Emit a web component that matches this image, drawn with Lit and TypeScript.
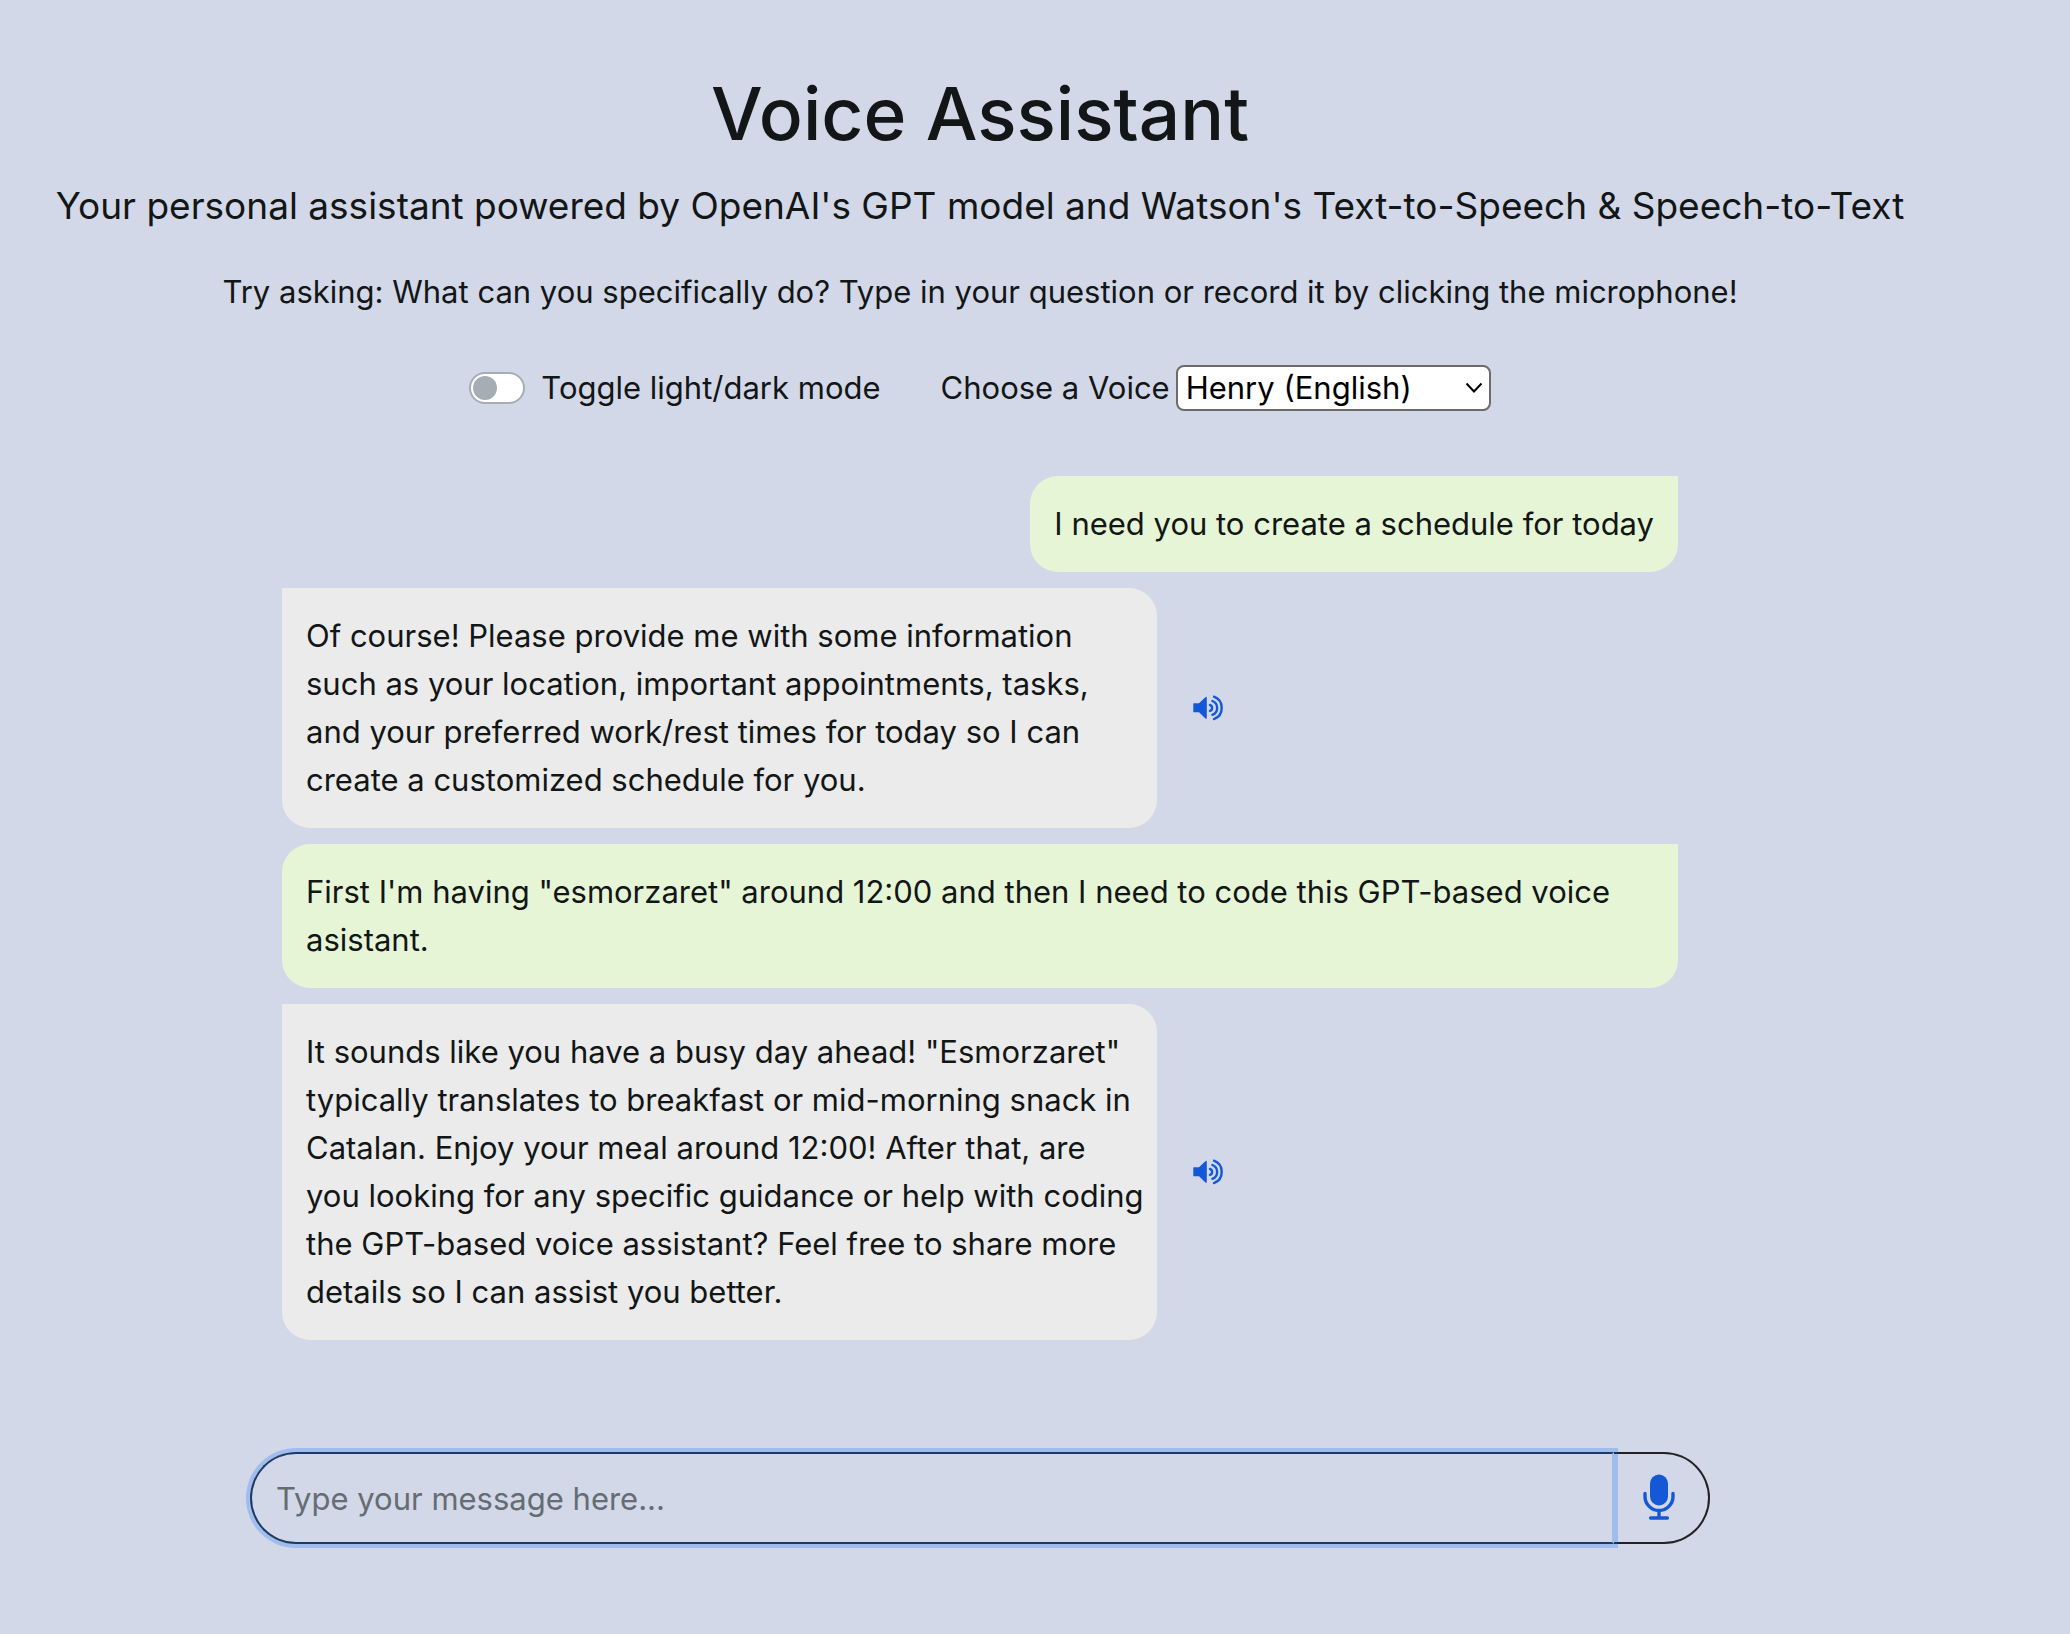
import { LitElement, html, css, svg } from "lit";
import { customElement, property, state } from "lit/decorators.js";

interface Message {
  from: "user" | "assistant";
  text: string;
}

const MESSAGES: Message[] = [
  { from: "user", text: "I need you to create a schedule for today" },
  {
    from: "assistant",
    text: "Of course! Please provide me with some information such as your location, important appointments, tasks, and your preferred work/rest times for today so I can create a customized schedule for you.",
  },
  {
    from: "user",
    text: 'First I\'m having "esmorzaret" around 12:00 and then I need to code this GPT-based voice asistant.',
  },
  {
    from: "assistant",
    text: 'It sounds like you have a busy day ahead! "Esmorzaret" typically translates to breakfast or mid-morning snack in Catalan. Enjoy your meal around 12:00! After that, are you looking for any specific guidance or help with coding the GPT-based voice assistant? Feel free to share more details so I can assist you better.',
  },
];

const speakerIcon = html`<svg width="30" height="26" viewBox="0 0 30 26" aria-hidden="true">
  ${svg`<path d="M.8 8.3H6L12.4 2.2Q13.8 1.2 13.8 2.8V22.8Q13.8 24.4 12.4 23.4L6 17.3H.8Q.3 17.3 .3 16.8V8.8Q.3 8.3 .8 8.3Z" fill="currentColor"/>
  <path d="M17 9.9A3.2 3.2 0 0 1 17 15.9M19.4 6A7.4 7.4 0 0 1 19.4 19.8M21 1.7A12 12 0 0 1 21 24.1" fill="none" stroke="currentColor" stroke-width="2.4" stroke-linecap="round"/>`}
</svg>`;

const micIcon = html`<svg width="32" height="46" viewBox="0 1 32 46" aria-hidden="true">
  ${svg`<rect x="7" y="0.5" width="18" height="31" rx="9" fill="currentColor"/>
  <path d="M2 19.5V22.5A14 14 0 0 0 30 22.5V19.5M16 37V44M7.6 44H24.4" fill="none" stroke="currentColor" stroke-width="3.4" stroke-linecap="round"/>`}
</svg>`;

@customElement("chat-message")
export class ChatMessage extends LitElement {
  @property() from = "user";
  @property() text = "";

  static styles = css`
    :host {
      display: flex;
      align-items: center;
      gap: 36px;
    }
    :host([from="user"]) {
      justify-content: flex-end;
    }
    .bubble {
      box-sizing: border-box;
      margin: 0;
      padding: 24px;
      border-radius: 28px;
      overflow-wrap: anywhere;
    }
    .user {
      background: #e7f5d7;
      border-top-right-radius: 0;
    }
    .assistant {
      flex: 0 1 875px;
      padding-right: 12px;
      background: #ebebeb;
      border-top-left-radius: 0;
    }
    .speak {
      display: flex;
      flex: none;
      padding: 0;
      border: 0;
      background: none;
      color: #1558d6;
      cursor: pointer;
    }
    .speak svg {
      overflow: visible;
    }
  `;

  render() {
    return html`
      <p class="bubble ${this.from}">${this.text}</p>
      ${this.from === "assistant"
        ? html`<button class="speak" type="button" aria-label="Play message">${speakerIcon}</button>`
        : null}
    `;
  }
}

@customElement("app-root")
export class AppRoot extends LitElement {
  @state() private messages = MESSAGES;

  static styles = css`
    :host {
      display: block;
      box-sizing: border-box;
      min-height: 100vh;
      padding: 66px 110px 88px 0;
      background: #d2d8e8;
      color: #121616;
      font: 400 31px/48px Inter, "Liberation Sans", sans-serif;
    }
    header {
      text-align: center;
    }
    h1 {
      margin: 0 0 14px;
      font-size: 73px;
      line-height: 96px;
      font-weight: 500;
    }
    .lead {
      margin: 0 0 32px;
      font-size: 37px;
      line-height: 60px;
    }
    .hint {
      margin: 0;
    }
    .controls {
      display: flex;
      flex-wrap: wrap;
      align-items: center;
      justify-content: center;
      gap: 16px 60px;
      margin-top: 48px;
    }
    .field {
      display: flex;
      align-items: center;
      gap: 6px;
    }
    .field.toggle {
      gap: 16px;
    }
    .switch {
      appearance: none;
      display: flex;
      box-sizing: border-box;
      width: 56px;
      height: 32px;
      margin: 0;
      padding: 2px;
      border: 2px solid #a5adb5;
      border-radius: 16px;
      background: #fff;
    }
    .switch::before {
      content: "";
      width: 24px;
      height: 24px;
      border-radius: 12px;
      background: #a5adb5;
    }
    .switch:checked {
      justify-content: flex-end;
    }
    .picker {
      display: grid;
      align-items: center;
    }
    .picker > * {
      grid-area: 1 / 1;
    }
    select {
      appearance: none;
      box-sizing: border-box;
      width: 315px;
      height: 46px;
      padding: 0 48px 0 8px;
      border: 2px solid #6b6b6b;
      border-radius: 8px;
      background: #fff;
      color: #000;
      font: inherit;
      line-height: 40px;
    }
    .chevron {
      justify-self: end;
      margin-right: 8px;
      pointer-events: none;
    }
    main {
      display: flex;
      flex-direction: column;
      box-sizing: border-box;
      max-width: 1460px;
      margin: 64px auto 0;
    }
    .log {
      display: flex;
      flex-direction: column;
      gap: 16px;
      padding: 0 32px;
    }
    .composer {
      display: flex;
      margin-top: 112px;
    }
    .message {
      position: relative;
      flex: 1;
      min-width: 0;
      box-sizing: border-box;
      height: 92px;
      padding: 0 24px;
      border: 2px solid #1f3a66;
      border-right-color: rgba(13, 110, 253, 0.25);
      border-radius: 46px 0 0 46px;
      outline: 0;
      background: transparent;
      box-shadow: 0 0 0 4px rgba(13, 110, 253, 0.25);
      color: inherit;
      font: inherit;
    }
    .message::placeholder {
      color: #656c72;
      opacity: 1;
    }
    .record {
      display: flex;
      align-items: center;
      justify-content: center;
      box-sizing: border-box;
      width: 96px;
      padding: 0 8px 0 4px;
      border: 2px solid #222;
      border-left: 0;
      border-radius: 0 46px 46px 0;
      background: none;
      color: #1558d6;
      cursor: pointer;
    }
    .record svg {
      overflow: visible;
    }
  `;

  render() {
    return html`
      <header>
        <h1>Voice Assistant</h1>
        <p class="lead">Your personal assistant powered by OpenAI's GPT model and Watson's Text-to-Speech &amp; Speech-to-Text</p>
        <p class="hint">Try asking: What can you specifically do? Type in your question or record it by clicking the microphone!</p>
      </header>
      <div class="controls">
        <div class="field toggle">
          <input class="switch" id="mode" type="checkbox" role="switch" />
          <label for="mode">Toggle light/dark mode</label>
        </div>
        <div class="field">
          <label for="voice">Choose a Voice</label>
          <div class="picker">
            <select id="voice">
              <option>Henry (English)</option>
            </select>
            <svg class="chevron" width="18" height="12" viewBox="0 0 18 12" aria-hidden="true">
              <path d="M1.5 1.5L9 9.5L16.5 1.5" fill="none" stroke="#000" stroke-width="2" />
            </svg>
          </div>
        </div>
      </div>
      <main>
        <div class="log">
          ${this.messages.map((m) => html`<chat-message from=${m.from} .text=${m.text}></chat-message>`)}
        </div>
        <form class="composer" @submit=${(e: Event) => e.preventDefault()}>
          <input class="message" type="text" placeholder="Type your message here..." aria-label="Message" />
          <button class="record" type="button" aria-label="Record message">${micIcon}</button>
        </form>
      </main>
    `;
  }
}
